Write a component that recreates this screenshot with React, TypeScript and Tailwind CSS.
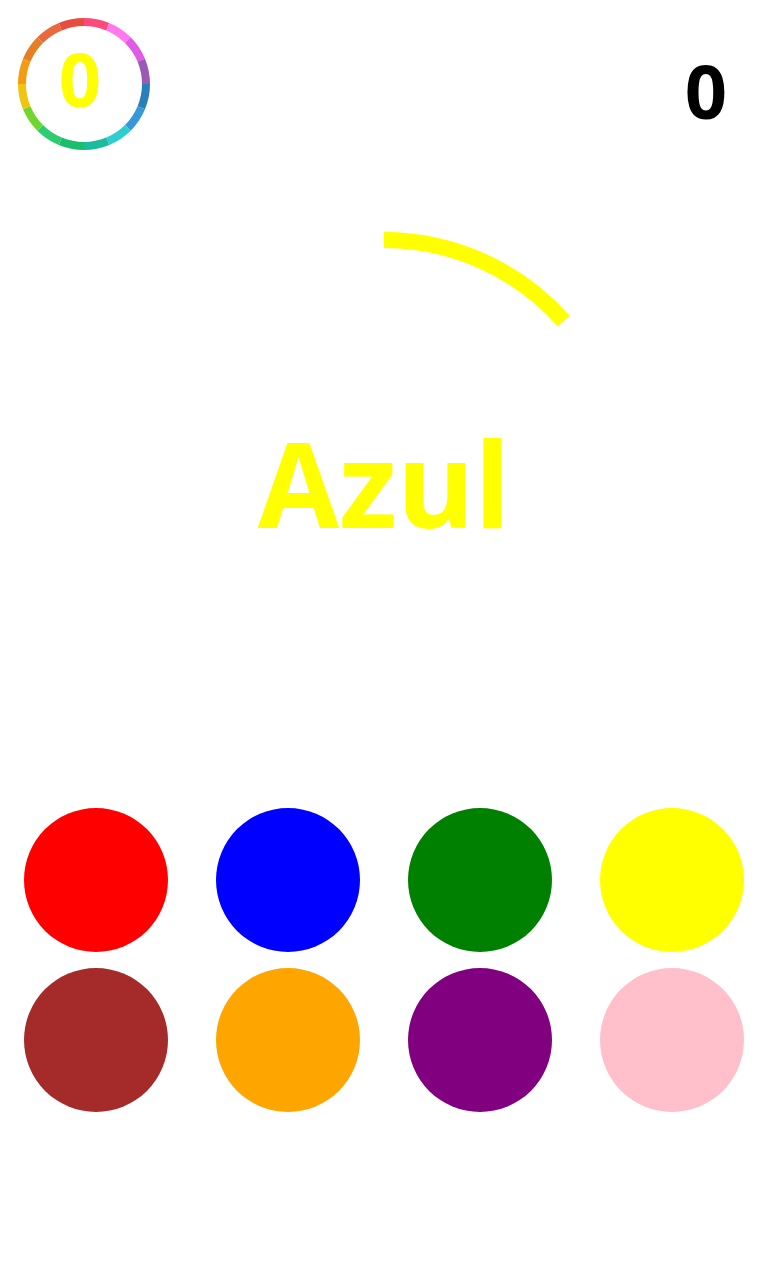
import React from "react";

const ringColors = [
  "#fc4a7a",
  "#ff78ee",
  "#e05ae6",
  "#9b59b6",
  "#2980b9",
  "#3498db",
  "#2ccfd0",
  "#1abc9c",
  "#1cbd6c",
  "#2ecc71",
  "#6fd62b",
  "#f1c40f",
  "#f39c12",
  "#e67e22",
  "#e9693c",
  "#e74c3c",
];

const choices = [
  { name: "rojo", color: "bg-[#ff0000]" },
  { name: "azul", color: "bg-[#0000ff]" },
  { name: "verde", color: "bg-[#008000]" },
  { name: "amarillo", color: "bg-[#ffff00]" },
  { name: "marrón", color: "bg-[#a52a2a]" },
  { name: "naranja", color: "bg-[#ffa500]" },
  { name: "morado", color: "bg-[#800080]" },
  { name: "rosa", color: "bg-[#ffc0cb]" },
];

function point(cx: number, cy: number, r: number, deg: number) {
  const rad = (deg * Math.PI) / 180;
  return [cx + r * Math.sin(rad), cy - r * Math.cos(rad)];
}

function RainbowRing({ value }: { value: number }) {
  const step = 360 / ringColors.length;
  return (
    <div className="relative w-[136px] h-[136px]">
      <svg width="136" height="136" viewBox="0 0 136 136">
        {ringColors.map((c, i) => {
          const [x1, y1] = point(68, 68, 62, i * step);
          const [x2, y2] = point(68, 68, 62, (i + 1) * step);
          return (
            <path
              key={i}
              d={`M${x1} ${y1} A62 62 0 0 1 ${x2} ${y2}`}
              stroke={c}
              strokeWidth="8"
              fill="none"
            />
          );
        })}
      </svg>
      {/* score sits inside the ring */}
      <div className="absolute inset-0 flex items-center justify-center pr-2 pb-[10px]">
        <span className="text-[74px] font-bold leading-none text-[#ffff00]">
          {value}
        </span>
      </div>
    </div>
  );
}

export default function App() {
  return (
    <div className="w-[768px] h-[1280px] bg-white font-['Open_Sans',sans-serif]">
      <div className="flex justify-between items-start px-4 pt-4">
        <RainbowRing value={0} />
        <div className="text-[74px] font-bold leading-none text-black mt-[38px] mr-[25px]">
          0
        </div>
      </div>

      <div className="relative h-[656px] pt-[272px]">
        <svg
          className="absolute inset-0 w-full h-full"
          viewBox="0 0 768 656"
        >
          <path
            d="M384 88 A240 240 0 0 1 563.7 169"
            stroke="#ffff00"
            strokeWidth="16"
            fill="none"
          />
        </svg>
        <h1 className="relative text-center text-[118px] font-bold leading-none text-[#ffff00]">
          Azul
        </h1>
      </div>

      <div className="grid grid-cols-4 gap-y-4">
        {choices.map((c) => (
          <button
            key={c.name}
            type="button"
            aria-label={c.name}
            className={`mx-auto w-[144px] h-[144px] rounded-full ${c.color}`}
          />
        ))}
      </div>
    </div>
  );
}
